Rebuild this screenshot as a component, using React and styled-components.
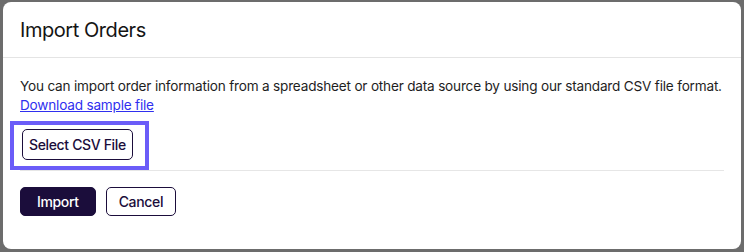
import React from "react";
import styled, { createGlobalStyle } from "styled-components";

const Global = createGlobalStyle`
  html, body { margin: 0; padding: 0; }
  body {
    background: #6c6c6c;
    width: 744px;
    height: 252px;
    overflow: hidden;
    font-family: Inter, "Liberation Sans", sans-serif;
  }
`;

const Dialog = styled.div`
  margin: 2px 0 0 3px;
  width: 738px;
  height: 247px;
  background: #ffffff;
  border-radius: 8px;
  display: flex;
  flex-direction: column;
  overflow: hidden;
`;

const Header = styled.div`
  height: 55px;
  padding: 0 17px;
  display: flex;
  align-items: center;
  border-bottom: 1px solid #e4e4e4;
  flex-shrink: 0;
`;

const Title = styled.h2`
  margin: 0;
  font-size: 20px;
  font-weight: 400;
  color: #141414;
  letter-spacing: -0.45px;
`;

const Body = styled.div`
  padding: 19px 17px 0;
  display: flex;
  flex-direction: column;
`;

const Text = styled.p`
  margin: 0;
  font-size: 13.6px;
  line-height: 19px;
  color: #1e1e1e;
  letter-spacing: -0.2px;
  white-space: nowrap;
`;

const Link = styled.a`
  color: #2f2fef;
  text-decoration: underline;
  cursor: pointer;
`;

const FocusRing = styled.div`
  align-self: flex-start;
  margin: 10px 0 4px -6px;
  padding: 4px 12px 6px 8px;
  outline: 4px solid #6b5cf8;
  display: flex;
`;

const Button = styled.button`
  font-family: Inter, "Liberation Sans", sans-serif;
  font-size: 14px;
  font-weight: 500;
  letter-spacing: -0.35px;
  height: ${(p) => p.$h}px;
  padding: 0 ${(p) => p.$px}px;
  border-radius: 5px;
  border: 1px solid #1b0d3b;
  background: ${(p) => (p.$primary ? "#1b0d3b" : "#ffffff")};
  color: ${(p) => (p.$primary ? "#ffffff" : "#1b0d3b")};
  cursor: pointer;
`;

const Divider = styled.hr`
  margin: 0;
  border: none;
  border-top: 1px solid #e6e6e6;
`;

const Footer = styled.div`
  padding: 16px 0 0;
  display: flex;
  gap: 10px;
`;

export default function App() {
  return (
    <>
      <Global />
      <Dialog>
        <Header>
          <Title>Import Orders</Title>
        </Header>
        <Body>
          <Text>
            You can import order information from a spreadsheet or other data source by using our standard CSV file format.
            <br />
            <Link>Download sample file</Link>
          </Text>
          <FocusRing>
            <Button $h={31} $px={6}>Select CSV File</Button>
          </FocusRing>
          <Divider />
          <Footer>
            <Button $primary $h={29} $px={16}>Import</Button>
            <Button $h={29} $px={12}>Cancel</Button>
          </Footer>
        </Body>
      </Dialog>
    </>
  );
}
